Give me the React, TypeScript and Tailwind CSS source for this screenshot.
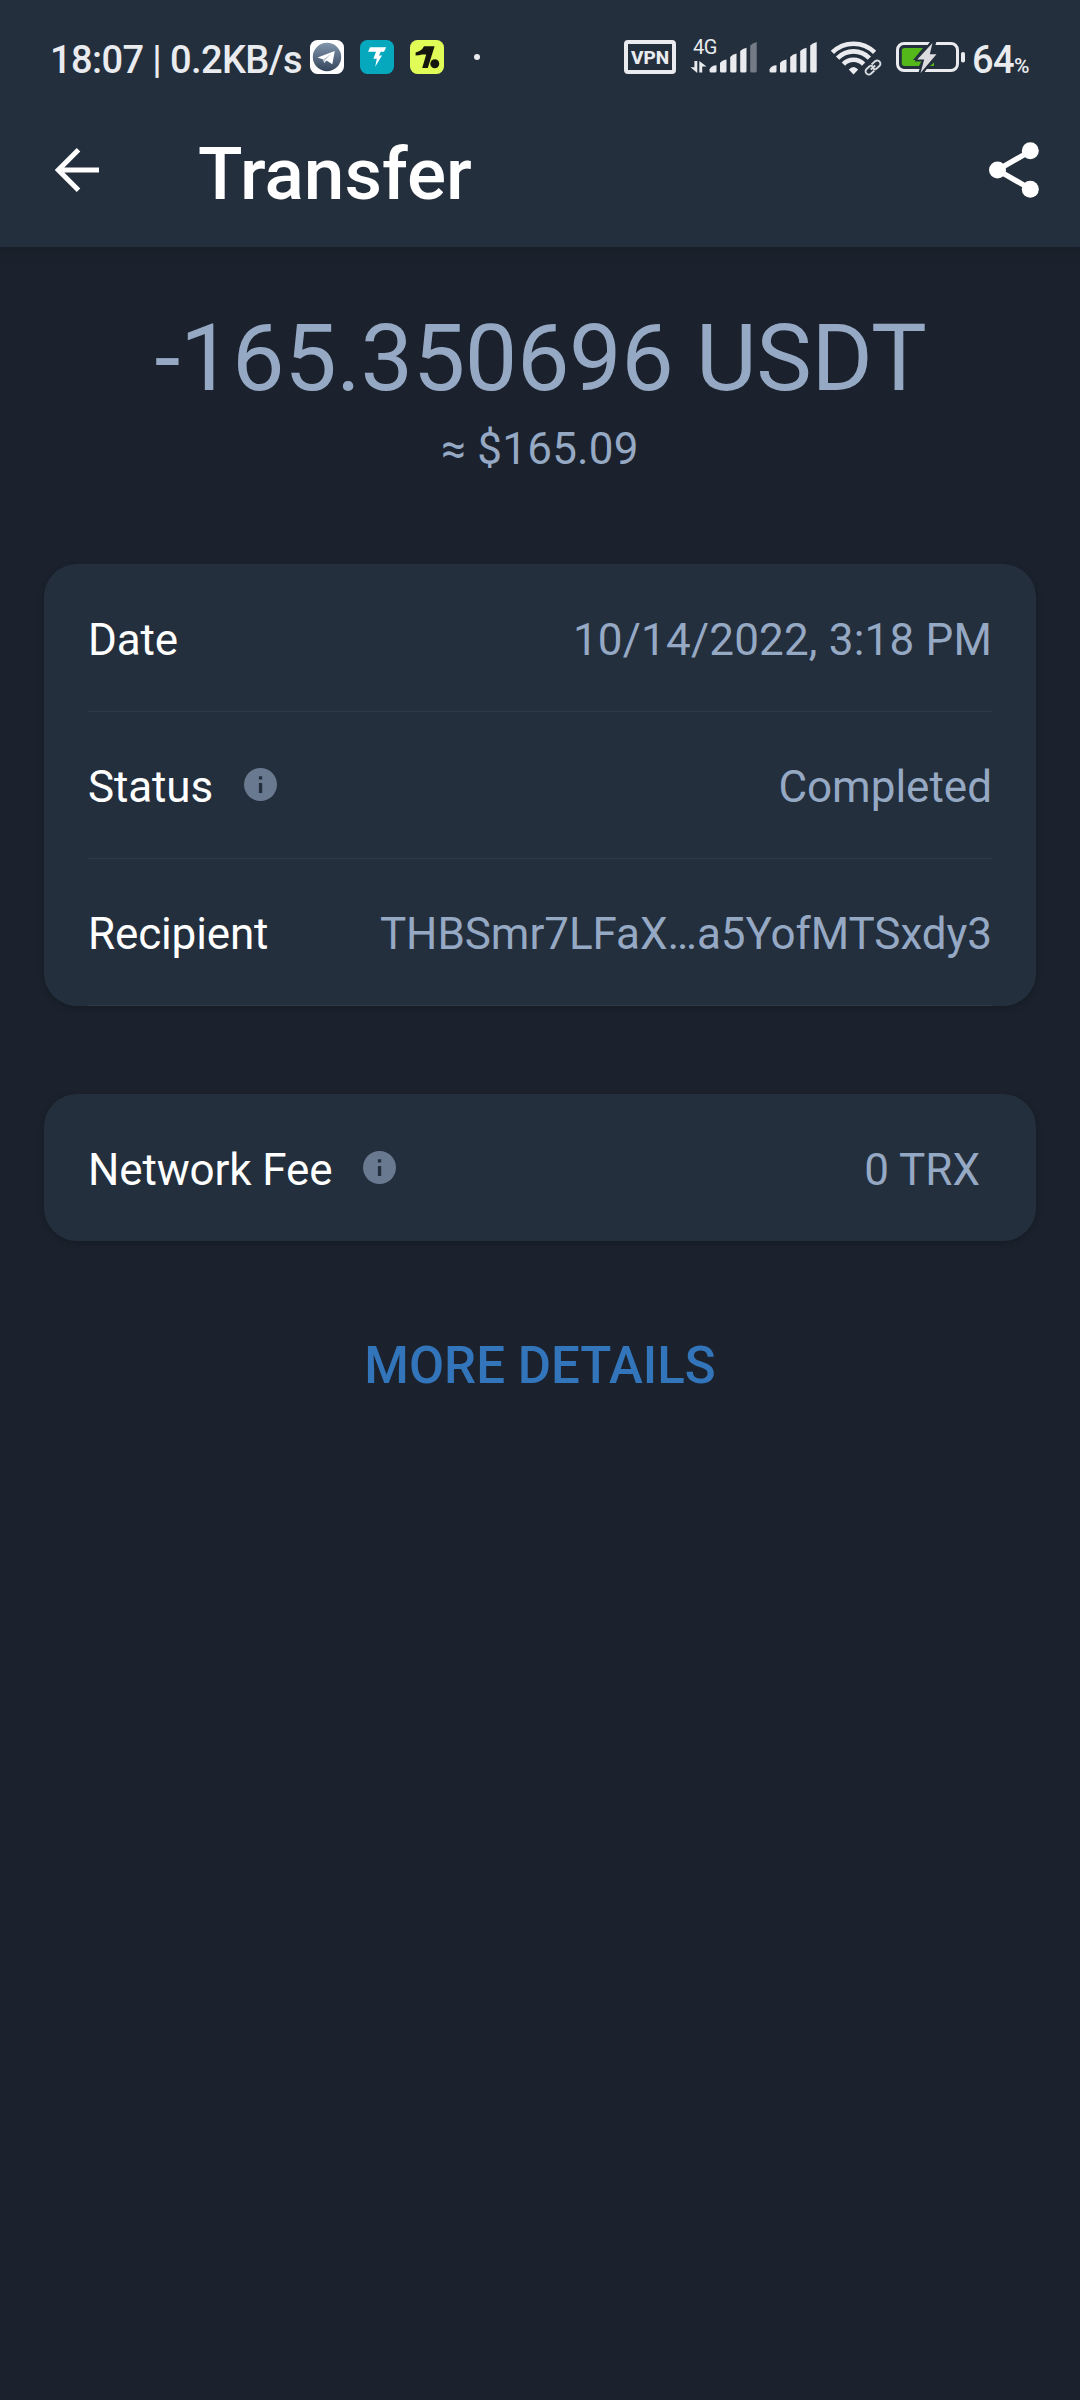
import type { ReactNode } from "react";

function TelegramIcon() {
  return (
    <svg width="34" height="34" viewBox="0 0 34 34">
      <defs>
        <linearGradient id="tg" x1="0" y1="0" x2="0" y2="1">
          <stop offset="0" stopColor="#8195ad" />
          <stop offset="1" stopColor="#34465c" />
        </linearGradient>
      </defs>
      <rect width="34" height="34" rx="7.5" fill="#ffffff" />
      <circle cx="17" cy="17" r="14.2" fill="url(#tg)" />
      <path d="M7.5 17.6 24.8 11 22.3 24.2 16.6 20.6 14.2 23 13.2 19.4Z" fill="#ffffff" />
      <path d="M13.2 19.4 21.5 13.6 15.2 20 14.2 23Z" fill="#b9c4d0" />
    </svg>
  );
}

function BoltAppIcon() {
  return (
    <svg width="34" height="34" viewBox="0 0 34 34">
      <rect width="34" height="34" rx="7.5" fill="#06a8be" />
      <path d="M10.2 7.3H26.2L24 11.8H20.8L19 15.6H22L15.2 26.8 16.8 18.8H13.4L16 11.8H8Z" fill="#ffffff" />
    </svg>
  );
}

function LimeAppIcon() {
  return (
    <svg width="34" height="34" viewBox="0 0 34 34">
      <rect width="34" height="34" rx="7.5" fill="#e2fc57" />
      <path d="M14 6.2H24.6L17.8 28H12.2L16.2 14.6H12Q9 15.6 5.6 15.6V12.4Q11.6 11.2 14 6.2Z" fill="#15170f" />
      <circle cx="24.8" cy="23.8" r="4.5" fill="#15170f" />
    </svg>
  );
}

function SignalBars({ dimLast = false }: { dimLast?: boolean }) {
  return (
    <svg width="49" height="31" viewBox="0 0 49 31">
      <g fill="#e9ebee">
        <path d="M0.5 27.5Q2 23.5 7.5 23.3V29Q7.500 30.500 6 30.500H2Q0.500 30.500 0.500 29Z" />
        <path d="M11 21Q13 18 17.500 17.500V29Q17.500 30.500 16 30.500H12.500Q11 30.500 11 29Z" />
        <path d="M21.200 15Q23.500 12.200 27.500 11.600V29Q27.500 30.500 26 30.500H22.700Q21.200 30.500 21.200 29Z" />
        <path d="M31.200 9Q33.500 6.500 37.500 5.700V29Q37.500 30.500 36 30.500H32.700Q31.200 30.500 31.200 29Z" />
        <path
          d="M41.200 3.500Q43.500 1 47.700 0V29Q47.700 30.500 46.200 30.500H42.700Q41.200 30.500 41.200 29Z"
          fill={dimLast ? "#747b86" : "#e9ebee"}
        />
      </g>
    </svg>
  );
}

function DataArrows() {
  return (
    <svg width="17" height="12" viewBox="0 0 17 12" fill="#e9ebee">
      <path d="M4.400 0H7.300V12L0.500 6.200H4.400Z" />
      <path d="M9.300 0 16.500 5.600H12.200V11.500H9.300Z" />
    </svg>
  );
}

function WifiLinkIcon() {
  return (
    <svg width="52" height="36" viewBox="0 0 52 36" fill="none">
      <g stroke="#e9ebee" strokeWidth="4.600">
        <path d="M2.400 12.400A30 30 0 0 1 44.600 12.400" />
        <path d="M7.600 18.200A22 22 0 0 1 39.400 18.200" />
        <path d="M13.400 24.100A14 14 0 0 1 33.600 24.100" />
      </g>
      <path d="M18.800 29.500Q23.500 24.500 28.200 29.500L23.500 34.500Z" fill="#e9ebee" />
      <g transform="rotate(-42 43 27.500)" stroke="#242f3d" strokeWidth="5">
        <rect x="34.500" y="24" width="9" height="7" rx="3.500" />
        <rect x="42.500" y="24" width="9" height="7" rx="3.500" />
      </g>
      <g transform="rotate(-42 43 27.500)" stroke="#d7dade" strokeWidth="1.900">
        <path d="M42 24.300H37.300A3.200 3.200 0 0 0 37.300 30.700H42" />
        <path d="M44 24.300H48.700A3.200 3.200 0 0 1 48.700 30.700H44" />
        <path d="M40 27.500H46" />
        <path d="M42 24.300A3.200 3.200 0 0 1 43.500 27.500M44 30.700A3.200 3.200 0 0 1 42.500 27.500" />
      </g>
    </svg>
  );
}

function BatteryIcon() {
  return (
    <svg width="70" height="34" viewBox="0 0 70 34">
      <rect x="1.500" y="3.500" width="60" height="27" rx="6.500" fill="none" stroke="#e9ebee" strokeWidth="3" />
      <path d="M8.500 8H27L17 20 H26L23 26H8.500Q5.800 26 5.800 23.300V10.700Q5.800 8 8.500 8Z" fill="#54b71a" />
      <path d="M34 26 38 22.500V26Z" fill="#54b71a" />
      <rect x="65" y="12" width="4" height="10.500" rx="1.800" fill="#e9ebee" />
      <path d="M35.500 0H41L37 12.500H43.500L27 34H22L26 21.500H18.500Z" fill="#242f3d" />
      <path d="M36.500 3 33.800 14.300H40.500L24.500 33 28.200 19.600H21.300Z" fill="#dcdce0" />
    </svg>
  );
}

function StatusBar() {
  return (
    <div className="flex h-[94px] items-start text-[#e9ebee]">
      <span className="ml-[50px] mt-[38px] w-[260px] whitespace-nowrap text-[38px] font-medium leading-[44px] tracking-[-0.6px]">
        18:07 | 0.2KB/s
      </span>
      <div className="mt-10 flex items-center gap-4">
        <TelegramIcon />
        <BoltAppIcon />
        <LimeAppIcon />
      </div>
      <span className="ml-[30px] mt-[54px] size-[6px] rounded-full bg-[#e9ebee]" />
      <div className="ml-[144px] mt-10 flex h-[34px] w-[52px] items-center justify-center rounded-[4px] border-4 border-[#e9ebee] text-[19px] font-extrabold leading-none">
        VPN
      </div>
      <div className="relative ml-[14px] mt-[42px] flex h-8 w-[67px] items-start">
        <div className="mt-[19px]">
          <DataArrows />
        </div>
        <div className="ml-[2px]">
          <SignalBars dimLast />
        </div>
        <span className="absolute left-[3px] top-[-7px] text-[20px] leading-6 tracking-[-0.5px]">4G</span>
      </div>
      <div className="ml-[12px] mt-[42px]">
        <SignalBars />
      </div>
      <div className="ml-[12px] mt-10">
        <WifiLinkIcon />
      </div>
      <div className="ml-[14px] mt-10">
        <BatteryIcon />
      </div>
      <div className="ml-[6px] mt-[38px] flex items-baseline whitespace-nowrap font-medium">
        <span className="text-[38px] leading-[44px] tracking-[-0.6px]">64</span>
        <span className="text-[21px] tracking-[-0.5px]">%</span>
      </div>
    </div>
  );
}

function AppBar() {
  return (
    <div className="flex h-[153px] items-start">
      <svg className="ml-[55px] mt-[54px]" width="44" height="44" viewBox="0 0 44 44" fill="none" stroke="#ffffff" strokeWidth="5">
        <path d="M44 22H3M23.500 1.800 3.300 22 23.500 42.200" />
      </svg>
      <h1 className="ml-[99px] mt-[37px] text-[73px] font-medium leading-[86px] text-white">Transfer</h1>
      <svg className="ml-auto mr-[40px] mt-[48px]" width="52" height="56" viewBox="0 0 52 56">
        <path d="M42.500 9 9.500 28 42.500 47" fill="none" stroke="#ffffff" strokeWidth="5.400" />
        <circle cx="42.300" cy="8.800" r="8.500" fill="#ffffff" />
        <circle cx="9.500" cy="28" r="8.500" fill="#ffffff" />
        <circle cx="42.300" cy="47.200" r="8.500" fill="#ffffff" />
      </svg>
    </div>
  );
}

function InfoIcon() {
  return (
    <svg className="mb-[5px] ml-[31px]" width="33" height="33" viewBox="0 0 33 33">
      <circle cx="16.500" cy="16.500" r="16.500" fill="#69798f" />
      <path d="M14.900 8.200H18.200V11.500H14.900ZM14.900 15H18.200V25H14.900Z" fill="#242f3d" />
    </svg>
  );
}

function Row({ label, info, children }: { label: string; info?: boolean; children: ReactNode }) {
  return (
    <div className="flex h-[147px] items-center justify-between pt-1">
      <div className="flex items-center tracking-[-0.14px] text-white">
        <span>{label}</span>
        {info && <InfoIcon />}
      </div>
      <span className="text-[#96a9c4]">{children}</span>
    </div>
  );
}

export default function App() {
  return (
    <div className="h-[2400px] w-[1080px] overflow-hidden bg-[#1b222d] font-['Roboto',sans-serif]">
      <header className="h-[247px] bg-[#242f3d] shadow-[0_4px_14px_rgba(0,0,0,0.12)]">
        <StatusBar />
        <AppBar />
      </header>

      <main className="px-11">
        <section className="flex flex-col items-center pt-[56px] text-[#96a9c4]">
          <p className="whitespace-nowrap pl-px text-[93.500px] leading-[110px] tracking-[-0.42px]">-165.350696 USDT</p>
          <p className="mt-[10px] text-[44px] leading-[52px] tracking-[0.2px]">≈ $165.09</p>
        </section>

        <section className="mt-[89px] rounded-[33px] bg-[#242f3d] px-11 text-[44px] leading-[52px] shadow-[0_2px_6px_rgba(0,0,0,0.2)]">
          <div className="border-b border-[#2e3947]">
            <Row label="Date">
              <span className="tracking-[0.18px]">10/14/2022, 3:18 PM</span>
            </Row>
          </div>
          <div className="-mt-px border-b border-[#2e3947]">
            <Row label="Status" info>
              Completed
            </Row>
          </div>
          <div className="-mt-px border-b border-[#2e3947]">
            <Row label="Recipient">
              <span className="tracking-[-0.05px]">THBSmr7LFaX…a5YofMTSxdy3</span>
            </Row>
          </div>
        </section>

        <section className="mt-[88px] rounded-[33px] bg-[#242f3d] px-11 text-[44px] leading-[52px] shadow-[0_2px_6px_rgba(0,0,0,0.2)]">
          <Row label="Network Fee" info>
            <span className="mr-[12px]">0 TRX</span>
          </Row>
        </section>

        <button className="mx-auto mt-[95px] block text-[51px] font-medium leading-[60px] text-[#3375bb]">MORE DETAILS</button>
      </main>
    </div>
  );
}
